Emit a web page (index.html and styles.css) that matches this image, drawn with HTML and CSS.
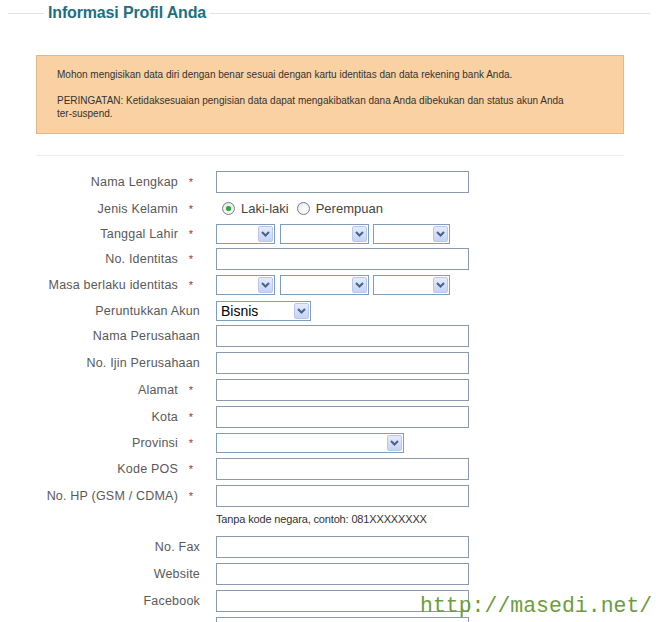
FILE: index.html
```html
<!DOCTYPE html>
<html lang="id">
<head>
<meta charset="utf-8">
<title>Informasi Profil Anda</title>
<link rel="stylesheet" href="styles.css">
</head>
<body>
<div class="page">
  <div class="legend">
    <span class="rule rule-short"></span>
    <h2 class="legend-title">Informasi Profil Anda</h2>
    <span class="rule rule-long"></span>
  </div>

  <div class="notice">
    <p>Mohon mengisikan data diri dengan benar sesuai dengan kartu identitas dan data rekening bank Anda.</p>
    <p>PERINGATAN: Ketidaksesuaian pengisian data dapat mengakibatkan dana Anda dibekukan dan status akun Anda <span class="nowrap">ter-suspend.</span></p>
  </div>

  <div class="sep"></div>

  <form class="form">
    <div class="row h27">
      <label class="lbl">Nama Lengkap<span class="req">*</span></label>
      <div class="ctl"><span class="inp"></span></div>
    </div>
    <div class="row h27">
      <label class="lbl">Jenis Kelamin<span class="req">*</span></label>
      <div class="ctl radios">
        <span class="radio checked"></span><span class="rtext">Laki-laki</span>
        <span class="radio"></span><span class="rtext">Perempuan</span>
      </div>
    </div>
    <div class="row h23">
      <label class="lbl">Tanggal Lahir<span class="req">*</span></label>
      <div class="ctl selects">
        <span class="sel w-day"><span class="sel-val"></span><span class="sel-btn"><svg width="9" height="6" viewBox="0 0 9 6"><path d="M1 1 L4.5 4.5 L8 1" fill="none" stroke="#4d6185" stroke-width="2"/></svg></span></span>
        <span class="sel w-month"><span class="sel-val"></span><span class="sel-btn"><svg width="9" height="6" viewBox="0 0 9 6"><path d="M1 1 L4.5 4.5 L8 1" fill="none" stroke="#4d6185" stroke-width="2"/></svg></span></span>
        <span class="sel w-year"><span class="sel-val"></span><span class="sel-btn"><svg width="9" height="6" viewBox="0 0 9 6"><path d="M1 1 L4.5 4.5 L8 1" fill="none" stroke="#4d6185" stroke-width="2"/></svg></span></span>
      </div>
    </div>
    <div class="row h27">
      <label class="lbl">No. Identitas<span class="req">*</span></label>
      <div class="ctl"><span class="inp"></span></div>
    </div>
    <div class="row h26">
      <label class="lbl">Masa berlaku identitas<span class="req">*</span></label>
      <div class="ctl selects">
        <span class="sel w-day"><span class="sel-val"></span><span class="sel-btn"><svg width="9" height="6" viewBox="0 0 9 6"><path d="M1 1 L4.5 4.5 L8 1" fill="none" stroke="#4d6185" stroke-width="2"/></svg></span></span>
        <span class="sel w-month"><span class="sel-val"></span><span class="sel-btn"><svg width="9" height="6" viewBox="0 0 9 6"><path d="M1 1 L4.5 4.5 L8 1" fill="none" stroke="#4d6185" stroke-width="2"/></svg></span></span>
        <span class="sel w-year"><span class="sel-val"></span><span class="sel-btn"><svg width="9" height="6" viewBox="0 0 9 6"><path d="M1 1 L4.5 4.5 L8 1" fill="none" stroke="#4d6185" stroke-width="2"/></svg></span></span>
      </div>
    </div>
    <div class="row h25">
      <label class="lbl">Peruntukkan Akun</label>
      <div class="ctl">
        <span class="sel w-akun"><span class="sel-val">Bisnis</span><span class="sel-btn"><svg width="9" height="6" viewBox="0 0 9 6"><path d="M1 1 L4.5 4.5 L8 1" fill="none" stroke="#4d6185" stroke-width="2"/></svg></span></span>
      </div>
    </div>
    <div class="row h26">
      <label class="lbl">Nama Perusahaan</label>
      <div class="ctl"><span class="inp"></span></div>
    </div>
    <div class="row h27">
      <label class="lbl">No. Ijin Perusahaan</label>
      <div class="ctl"><span class="inp"></span></div>
    </div>
    <div class="row h27">
      <label class="lbl">Alamat<span class="req">*</span></label>
      <div class="ctl"><span class="inp"></span></div>
    </div>
    <div class="row h27">
      <label class="lbl">Kota<span class="req">*</span></label>
      <div class="ctl"><span class="inp"></span></div>
    </div>
    <div class="row h26">
      <label class="lbl">Provinsi<span class="req">*</span></label>
      <div class="ctl">
        <span class="sel w-prov"><span class="sel-val"></span><span class="sel-btn"><svg width="9" height="6" viewBox="0 0 9 6"><path d="M1 1 L4.5 4.5 L8 1" fill="none" stroke="#4d6185" stroke-width="2"/></svg></span></span>
      </div>
    </div>
    <div class="row h26">
      <label class="lbl">Kode POS<span class="req">*</span></label>
      <div class="ctl"><span class="inp"></span></div>
    </div>
    <div class="row h27">
      <label class="lbl">No. HP (GSM / CDMA)<span class="req">*</span></label>
      <div class="ctl"><span class="inp"></span></div>
    </div>
    <div class="row hint-row">
      <span class="lbl"></span>
      <div class="ctl hint">Tanpa kode negara, contoh: 081XXXXXXXX</div>
    </div>
    <div class="row h27">
      <label class="lbl">No. Fax</label>
      <div class="ctl"><span class="inp"></span></div>
    </div>
    <div class="row h27">
      <label class="lbl">Website</label>
      <div class="ctl"><span class="inp"></span></div>
    </div>
    <div class="row h27">
      <label class="lbl">Facebook</label>
      <div class="ctl"><span class="inp"></span></div>
    </div>
    <div class="row h27">
      <span class="lbl"></span>
      <div class="ctl"><span class="inp"></span></div>
    </div>
  </form>

  <div class="watermark">http://masedi.net/</div>
</div>
</body>
</html>
```

FILE: styles.css
```css
* { box-sizing: border-box; }

html, body {
  margin: 0;
  padding: 0;
  background: #ffffff;
  overflow: hidden;
}

body {
  font-family: "Liberation Sans", Arial, sans-serif;
  color: #444;
}

.page {
  position: relative;
  width: 656px;
  height: 622px;
  overflow: hidden;
}

/* legend / title */
.legend {
  display: flex;
  align-items: center;
  height: 27px;
  padding-left: 8px;
}
.rule {
  height: 1px;
  background: #e3e3e3;
}
.rule-short { width: 36px; }
.rule-long { flex: 1; margin-right: 6px; margin-left: 4px; }
.legend-title {
  margin: 0 0 0 4px;
  font-family: "Liberation Sans", Arial, sans-serif;
  font-weight: bold;
  font-size: 16px;
  letter-spacing: -0.15px;
  color: #1d6f80;
  line-height: 20px;
  position: relative;
  top: -1px;
}

/* notice */
.notice {
  margin: 28px 0 0 36px;
  width: 588px;
  background: #fad1a2;
  border: 1px solid #e8b584;
  padding: 12px 20px 13px 20px;
  font-size: 10px;
  line-height: 13px;
  color: #333;
  letter-spacing: 0;
}
.notice p { margin: 0; }
.notice p + p { margin-top: 13px; }
.nowrap { white-space: nowrap; }

.sep {
  margin: 21px 0 0 36px;
  width: 588px;
  height: 1px;
  background: #ececec;
}

/* form */
.form {
  padding-top: 12px;
}
.row {
  display: grid;
  grid-template-columns: 200px 260px;
  column-gap: 16px;
  align-items: center;
}
.h23 { height: 23px; }
.h25 { height: 25px; }
.h26 { height: 26px; }
.h27 { height: 27px; }
.hint-row { height: 24px; align-items: start; }

.lbl {
  text-align: right;
  font-size: 12.5px;
  letter-spacing: 0.2px;
  color: #595959;
  white-space: nowrap;
}
.req {
  display: inline-block;
  width: 22px;
  padding-left: 4px;
  text-align: center;
  color: #a83232;
  font-size: 11px;
  letter-spacing: 0;
}

.ctl {
  display: flex;
  align-items: center;
}

.inp {
  display: block;
  width: 253px;
  height: 22px;
  border: 1px solid #8b9aa8;
  background: #fff;
}

/* radios */
.radios { padding-left: 6px; }
.radio {
  width: 13px;
  height: 13px;
  border-radius: 50%;
  border: 1px solid #6f7f90;
  background: radial-gradient(circle at 60% 60%, #ffffff 0, #f1f1ec 60%, #d8d8d0 100%);
  display: flex;
  align-items: center;
  justify-content: center;
  margin-top: -1px;
}
.radio.checked::after {
  content: "";
  width: 5px;
  height: 5px;
  border-radius: 50%;
  background: #2fa53a;
  box-shadow: 0 0 1px #7fd47f;
}
.rtext {
  font-size: 13px;
  color: #444;
  margin-left: 6px;
  margin-right: 8px;
}

/* selects */
.selects { gap: 5px; }
.selects .w-month + .w-year { margin-left: -1px; }
.sel {
  display: flex;
  align-items: center;
  height: 20px;
  border: 1px solid #7f9db9;
  background: #fff;
  padding: 1px;
}
.w-day { width: 59px; }
.w-month { width: 89px; }
.w-year { width: 77px; }
.w-akun { width: 95px; }
.w-prov { width: 188px; }
.sel-val {
  flex: 1;
  font-size: 14px;
  color: #000;
  padding-left: 3px;
  line-height: 16px;
}
.sel-btn {
  width: 15px;
  height: 16px;
  border: 1px solid #b7c8ec;
  border-radius: 2px;
  background: linear-gradient(#e4ecfd, #c3d4f6);
  display: flex;
  align-items: center;
  justify-content: center;
}

.hint {
  font-size: 11px;
  letter-spacing: -0.15px;
  color: #333;
  padding-top: 4px;
}

/* watermark overlay */
.watermark {
  position: absolute;
  left: 420px;
  top: 593px;
  font-family: "Liberation Mono", "Courier New", monospace;
  font-size: 21.5px;
  line-height: 26px;
  color: #6c9c3e;
  white-space: nowrap;
}
```
